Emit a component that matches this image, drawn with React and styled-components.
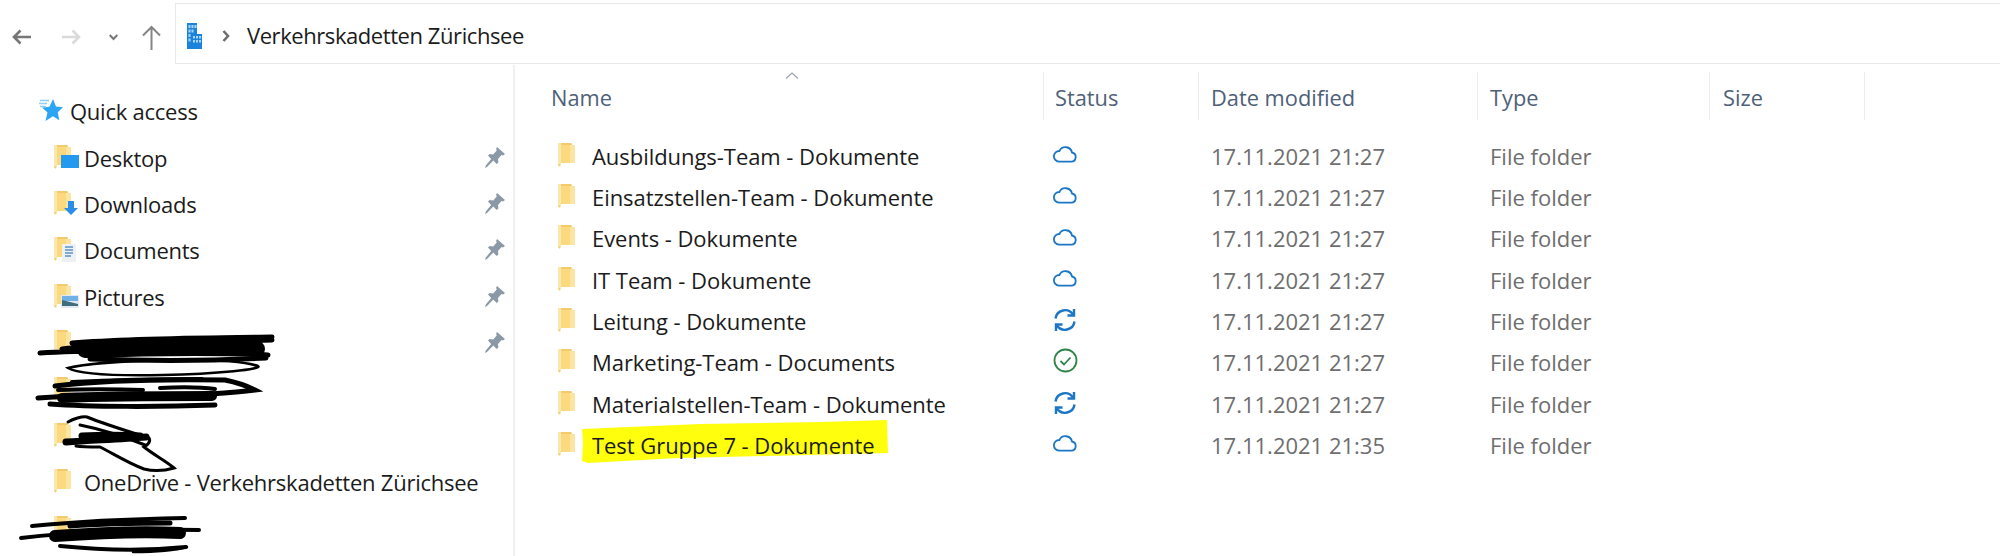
import React from "react";
import styled, { createGlobalStyle } from "styled-components";

const GlobalStyle = createGlobalStyle`
  html, body {
    margin: 0;
    padding: 0;
    background: #fff;
  }
  body {
    font-family: "Open Sans", "Noto Sans", "Liberation Sans", sans-serif;
    color: #1b1b1b;
  }
`;

const Page = styled.div`
  position: relative;
  width: 2000px;
  height: 556px;
  overflow: hidden;
  background: #fff;
`;

const Toolbar = styled.div`
  display: flex;
  align-items: flex-start;
  height: 65px;
  padding: 3px 0 0 12px;
  box-sizing: border-box;
`;

const NavButton = styled.span`
  display: flex;
  align-items: center;
  justify-content: center;
  flex: none;
  height: 61px;
  padding-top: 7px;
  box-sizing: border-box;
  margin-left: ${(p) => p.$gap || 0}px;
`;

const AddressBar = styled.div`
  display: flex;
  align-items: center;
  flex: 1;
  height: 61px;
  margin-left: 14px;
  padding: 5px 0 0 11px;
  box-sizing: border-box;
  border: 1px solid #e8e8e8;
  border-right: none;
`;

const Crumb = styled.span`
  margin: 0 0 2px 17px;
  font-size: 22px;
  letter-spacing: -0.43px;
  white-space: nowrap;
`;

const Body = styled.div`
  display: flex;
  height: 491px;
`;

const Sidebar = styled.nav`
  flex: none;
  width: 515px;
  padding-top: 24px;
  box-sizing: border-box;
  border-right: 2px solid #f1f1f1;
`;

const SideRow = styled.div`
  display: flex;
  align-items: center;
  height: 46.4px;
  padding: 0 8px 0 ${(p) => (p.$top ? 38 : 54)}px;
  font-size: 22px;
  letter-spacing: -0.24px;
`;

const SideLabel = styled.span`
  margin: 0 0 2px ${(p) => (p.$top ? 6 : 4)}px;
  white-space: nowrap;
`;

const IconSlot = styled.span`
  display: flex;
  flex: none;
  margin-bottom: 4px;
`;

const Pin = styled.svg`
  flex: none;
  margin: 0 0 3px auto;
`;

const Main = styled.main`
  flex: 1;
  min-width: 0;
  padding-top: 7px;
`;

const columns = "529px 155px 279px 232px 155px";

const HeaderRow = styled.div`
  display: grid;
  grid-template-columns: ${columns} 1fr;
  height: 48px;
  margin-bottom: 16px;
`;

const HeaderCell = styled.div`
  position: relative;
  display: flex;
  align-items: center;
  padding: 2px 0 0 ${(p) => p.$pad}px;
  border-right: 1px solid #ececec;
  font-size: 21.8px;
  color: #4e6178;
`;

const SortCaret = styled.svg`
  position: absolute;
  left: 270px;
  top: 0;
`;

const FileRow = styled.div`
  display: grid;
  grid-template-columns: ${columns} 1fr;
  align-items: center;
  height: 41.33px;
`;

const NameCell = styled.div`
  position: relative;
  display: flex;
  align-items: center;
  padding-left: 43px;
  font-size: 22px;
  letter-spacing: -0.05px;
  white-space: nowrap;
`;

const Highlight = styled.svg`
  position: absolute;
  left: 65px;
  top: -11px;
`;

const NameText = styled.span`
  position: relative;
  margin: 0 0 2px 16px;
`;

const StatusCell = styled.div`
  display: flex;
  align-items: center;
  padding: 0 0 ${(p) => (p.$kind === "sync" ? 3 : 5)}px 9px;
`;

const MutedCell = styled.div`
  padding: 0 0 2px 12px;
  font-size: 22px;
  color: #6e6e6e;
  white-space: nowrap;
`;

const Scribbles = styled.svg`
  position: absolute;
  left: 0;
  top: 0;
  pointer-events: none;
`;

const Folder = ({ width = 18, children }) => (
  <IconSlot>
    <svg width={width} height="26" viewBox={`0 0 ${width} 26`}>
      <path d="M0 1h13l1 1v19H3l-1 4-2-2z" fill="#f3cb6c" />
      <path d="M3 3h14v18H3z" fill="#fbd97f" />
      <path d="M12 3h5v18h-5z" fill="#fce5a2" />
      <path d="M0 1h3v22l-3-1z" fill="#fbe6ad" />
      {children}
    </svg>
  </IconSlot>
);

const overlays = {
  desktop: <rect x="7" y="11" width="18" height="13" fill="#2399f0" />,
  downloads: <path d="M14 11h6v7h4l-7 7-7-7h4z" fill="#2a8ee8" />,
  documents: (
    <g>
      <rect x="8" y="8" width="14" height="18" fill="#eef1f4" />
      <path d="M11 11h8M11 14h8M11 17h8M11 20h6" stroke="#5c92c9" strokeWidth="1.4" />
    </g>
  ),
  pictures: (
    <g>
      <rect x="7" y="12" width="18" height="13" fill="#e3e9ee" />
      <path d="M8 13h16v5H8z" fill="#6fb0e6" />
      <path d="M8 17l8 2 8 2v2H8z" fill="#3f6d7d" />
    </g>
  ),
};

const Star = () => (
  <IconSlot>
    <svg width="26" height="24" viewBox="0 0 26 24">
      <path d="M15 1l3 7.600 7 .6-5.300 5 1.600 8-6.300-4-7.500 4.800 2-8.400L4 9.400l7.500-.6z" fill="#2ba6f4" />
      <path d="M2 2.500h9M1 5.500h8M2 8.500h6" stroke="#8fd0f8" strokeWidth="1.500" />
    </svg>
  </IconSlot>
);

const PinIcon = () => (
  <Pin width="20" height="21" viewBox="0 0 20 21">
    <path d="M12 0l8 7-2 1.500-1.500-.6-3.500 4 .4 3.500-1.800 1.500-3.300-3.400L2 20l-2 1 .8-2.500 5.400-6.500L3 8.600 4.600 7l3.600.5 3.500-4-.6-1.800z" fill="#8b99a6" />
  </Pin>
);

const Cloud = () => (
  <svg width="24" height="18" viewBox="0 0 24 18" fill="none" stroke="#1b76c6" strokeWidth="1.800">
    <path d="M6 16.600h12.300a4.600 4.600 0 0 0 .7-9.100A6.700 6.700 0 0 0 6.400 6 5.300 5.300 0 0 0 6 16.600z" />
  </svg>
);

const Sync = () => (
  <svg width="24" height="24" viewBox="0 0 24 24" fill="none" stroke="#1b76c6" strokeWidth="2.400">
    <path d="M2.500 10.500A9.600 9.600 0 0 1 20 6.500M21.500 13.500A9.600 9.600 0 0 1 4 17.500" />
    <path d="M21 1v6.500h-6.500M3 23v-6.500h6.500" />
  </svg>
);

const Synced = () => (
  <svg width="25" height="25" viewBox="0 0 25 25" fill="none" stroke="#2f8548" strokeWidth="1.800">
    <circle cx="12.500" cy="12.500" r="11" />
    <path d="M7.500 13l3.500 3.500 6.500-7" />
  </svg>
);

const statusIcons = { cloud: <Cloud />, sync: <Sync />, ok: <Synced /> };

const files = [
  ["Ausbildungs-Team - Dokumente", "cloud", "17.11.2021 21:27"],
  ["Einsatzstellen-Team - Dokumente", "cloud", "17.11.2021 21:27"],
  ["Events - Dokumente", "cloud", "17.11.2021 21:27"],
  ["IT Team - Dokumente", "cloud", "17.11.2021 21:27"],
  ["Leitung - Dokumente", "sync", "17.11.2021 21:27"],
  ["Marketing-Team - Documents", "ok", "17.11.2021 21:27"],
  ["Materialstellen-Team - Dokumente", "sync", "17.11.2021 21:27"],
  ["Test Gruppe 7 - Dokumente", "cloud", "17.11.2021 21:35", true],
];

const places = [
  { label: "Desktop", icon: "desktop", pinned: true },
  { label: "Downloads", icon: "downloads", pinned: true },
  { label: "Documents", icon: "documents", pinned: true },
  { label: "Pictures", icon: "pictures", pinned: true },
  { label: "", pinned: true },
  { label: "" },
  { label: "" },
  { label: "OneDrive - Verkehrskadetten Zürichsee" },
  { label: "" },
];

const headers = [
  ["Name", 36],
  ["Status", 11],
  ["Date modified", 12],
  ["Type", 12],
  ["Size", 13],
];

export default function App() {
  return (
    <Page>
      <GlobalStyle />
      <Toolbar>
        <NavButton>
          <svg width="19" height="16" viewBox="0 0 19 16" fill="none" stroke="#767676" strokeWidth="2.600">
            <path d="M19 8H2M8.500 1.500L2 8l6.500 6.500" />
          </svg>
        </NavButton>
        <NavButton $gap={31}>
          <svg width="19" height="16" viewBox="0 0 19 16" fill="none" stroke="#dadada" strokeWidth="2.600">
            <path d="M0 8h17M10.500 1.500L17 8l-6.500 6.500" />
          </svg>
        </NavButton>
        <NavButton $gap={28}>
          <svg width="9" height="7" viewBox="0 0 9 7" fill="none" stroke="#767676" strokeWidth="2">
            <path d="M.7 1l3.800 4 3.800-4" />
          </svg>
        </NavButton>
        <NavButton $gap={24}>
          <svg width="19" height="25" viewBox="0 0 19 25" fill="none" stroke="#858585" strokeWidth="2">
            <path d="M9.500 25V2M1 10.500l8.500-8.500 8.500 8.500" />
          </svg>
        </NavButton>
        <AddressBar>
          <svg width="15" height="26" viewBox="0 0 15 26" style={{ flex: "none" }}>
            <path d="M0 0h10v11h5v15H0z" fill="#1c83dc" />
            <path d="M1.500 2h2v3h-2zM4.500 2h2v3h-2zM7.500 2h2v3h-2zM1.500 6.500h2v3h-2zM4.500 6.500h2v3h-2zM1.500 11h2v3h-2zM1.500 15.500h2v3h-2zM6 13h2v2.500H6zM9 13h2v2.500H9zM12 13h2v2.500h-2zM6 17h2v2.500H6zM9 17h2v2.500H9zM12 17h2v2.500h-2z" fill="#a9d6fa" />
          </svg>
          <svg width="8" height="12" viewBox="0 0 8 12" fill="none" stroke="#6f6f6f" strokeWidth="2.600" style={{ marginLeft: 20, flex: "none" }}>
            <path d="M1.500 1l4.500 5-4.500 5" />
          </svg>
          <Crumb>Verkehrskadetten Zürichsee</Crumb>
        </AddressBar>
      </Toolbar>
      <Body>
        <Sidebar>
          <SideRow $top>
            <Star />
            <SideLabel $top>Quick access</SideLabel>
          </SideRow>
          {places.map((place, i) => (
            <SideRow key={i}>
              <Folder width={26}>{overlays[place.icon]}</Folder>
              <SideLabel>{place.label}</SideLabel>
              {place.pinned && <PinIcon />}
            </SideRow>
          ))}
        </Sidebar>
        <Main>
          <HeaderRow>
            {headers.map(([title, pad]) => (
              <HeaderCell key={title} $pad={pad}>
                {title === "Name" && (
                  <SortCaret width="14" height="7" viewBox="0 0 14 7" fill="none" stroke="#9aa3ad" strokeWidth="1.200">
                    <path d="M1 6.500l6-5.500 6 5.500" />
                  </SortCaret>
                )}
                {title}
              </HeaderCell>
            ))}
          </HeaderRow>
          {files.map(([name, status, date, marked]) => (
            <FileRow key={name}>
              <NameCell>
                {marked && (
                  <Highlight width="310" height="44" viewBox="0 0 310 44">
                    <path d="M2 10L120 5 240 3l67-2 1 33-120 3-90 2-90 5-6-2 1-18z" fill="#ffff0d" />
                  </Highlight>
                )}
                <Folder />
                <NameText>{name}</NameText>
              </NameCell>
              <StatusCell $kind={status}>{statusIcons[status]}</StatusCell>
              <MutedCell>{date}</MutedCell>
              <MutedCell>File folder</MutedCell>
            </FileRow>
          ))}
        </Main>
      </Body>
      <Scribbles width="2000" height="556" viewBox="0 0 2000 556" fill="none" stroke="#000" strokeLinecap="round">
        <path strokeWidth="5" d="M40 353c40-3 160-3 228 2M62 349c60-6 150-7 210-9M72 343c60-5 130-5 200-6M90 359c60 2 120 2 176-1" />
        <path strokeWidth="16" d="M85 350c60-2 120-3 172-1" />
        <path strokeWidth="2.500" d="M68 368c30-8 160-12 190-2 6 3-40 8-95 9-50 1-85-1-95-7z" />
        <path strokeWidth="5" d="M55 386c50-6 110-7 170-6 10 2 20 5 30 10-15 2-30 3-45 4M38 398c50-4 110-5 172-2M50 404c40 3 110 3 165 1" />
        <path strokeWidth="10" d="M62 398c50-2 100-2 150-2" />
        <path strokeWidth="4" d="M58 390c30-1 55-1 85 0M160 388c20-1 40-1 55 1M72 382c40-2 80-3 130-3" />
        <path strokeWidth="3" d="M68 422c5-3 14-6 19-5 20 8 40 14 62 21 2 3-1 7-5 9 10 8 22 14 30 21-10 3-22 3-30 1-16-6-30-15-44-22-10 0-18 0-24-1M80 425c20 4 40 10 65 20" />
        <path strokeWidth="7" d="M66 442c30-2 55-3 80-5M82 436c20-1 40-1 58 0" />
        <path strokeWidth="4" d="M32 526c50-5 100-7 153-8M21 538c50-6 120-9 178-8M60 546c40 4 85 5 126 1" />
        <path strokeWidth="12" d="M55 536c40-3 85-5 125-3" />
        <path strokeWidth="5" d="M70 526c40-3 70-3 100-3" />
        <path strokeWidth="2.500" d="M133 552c20 0 40-1 54-5" />
      </Scribbles>
    </Page>
  );
}
